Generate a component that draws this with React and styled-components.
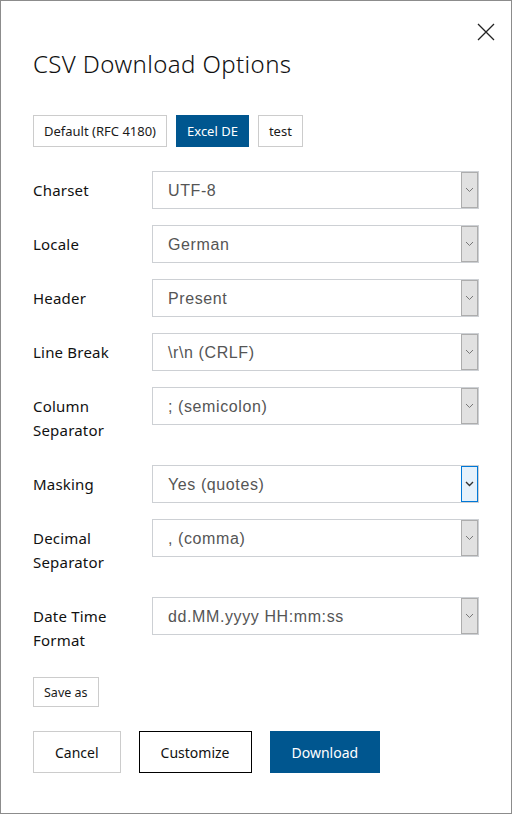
import React from "react";
import styled, { createGlobalStyle } from "styled-components";

const GlobalStyle = createGlobalStyle`
  body {
    margin: 0;
    background: #ffffff;
    font-family: "Noto Sans", "Open Sans", sans-serif;
  }
`;

const Dialog = styled.div`
  position: relative;
  width: 512px;
  height: 814px;
  box-sizing: border-box;
  border: 1px solid #8c8c8c;
  padding: 47px 32px 0 32px;
  background: #ffffff;
  color: #111111;
`;

const CloseButton = styled.button`
  position: absolute;
  top: 20px;
  right: 14px;
  width: 22px;
  height: 22px;
  padding: 0;
  border: none;
  background: none;
  display: flex;
  align-items: center;
  justify-content: center;
`;

const Title = styled.h1`
  margin: 0;
  font-size: 24px;
  line-height: 32px;
  font-weight: 300;
  letter-spacing: 0.4px;
  color: #111111;
`;

const PresetBar = styled.div`
  display: flex;
  gap: 9px;
  margin-top: 35px;
`;

const Preset = styled.button`
  height: 32px;
  box-sizing: border-box;
  padding: 0 10px;
  font-family: "Noto Sans", sans-serif;
  font-size: 13px;
  border: 1px solid ${(p) => (p.active ? "#00568f" : "#cccccc")};
  background: ${(p) => (p.active ? "#00568f" : "#ffffff")};
  color: ${(p) => (p.active ? "#ffffff" : "#1a1a1a")};
`;

const Form = styled.div`
  display: flex;
  flex-direction: column;
  gap: 16px;
  margin-top: 24px;
`;

const Row = styled.div`
  display: flex;
  align-items: flex-start;
`;

const Label = styled.div`
  width: 119px;
  flex-shrink: 0;
  padding: 7px 0;
  font-size: 15px;
  line-height: 24px;
  letter-spacing: 0.2px;
  color: #111111;
`;

const Select = styled.div`
  flex: 1;
  height: 38px;
  box-sizing: border-box;
  display: flex;
  border: 1px solid #cdd0d4;
  background: #ffffff;
`;

const SelectValue = styled.div`
  flex: 1;
  display: flex;
  align-items: center;
  padding: 1px 0 0 15px;
  font-family: "Liberation Sans", Arial, sans-serif;
  font-size: 16px;
  letter-spacing: 0.6px;
  color: #555555;
`;

const ArrowBox = styled.div`
  width: 17px;
  box-sizing: border-box;
  display: flex;
  align-items: center;
  justify-content: center;
  border: 1px solid ${(p) => (p.focused ? "#0078d7" : "#adadad")};
  background: ${(p) => (p.focused ? "#e5f1fb" : "#e1e1e1")};
`;

const SaveButton = styled.button`
  margin-top: 18px;
  height: 30px;
  box-sizing: border-box;
  padding: 0 10px;
  border: 1px solid #cccccc;
  background: #ffffff;
  font-family: "Noto Sans", sans-serif;
  font-size: 12.5px;
  color: #1a1a1a;
`;

const Footer = styled.div`
  display: flex;
  gap: 18px;
  margin-top: 24px;
`;

const ActionButton = styled.button`
  height: 42px;
  box-sizing: border-box;
  padding: 0 21px;
  font-family: "Noto Sans", sans-serif;
  font-size: 14px;
  border: 1px solid
    ${(p) =>
      p.variant === "primary" ? "#00568f" : p.variant === "outline" ? "#000000" : "#cccccc"};
  background: ${(p) => (p.variant === "primary" ? "#00568f" : "#ffffff")};
  color: ${(p) => (p.variant === "primary" ? "#ffffff" : "#111111")};
`;

const Chevron = ({ dark }) => (
  <svg width="9" height="6" viewBox="0 0 9 6">
    <path
      d="M1 1 L4.5 4.5 L8 1"
      fill="none"
      stroke={dark ? "#333333" : "#777777"}
      strokeWidth={dark ? 1.4 : 1}
    />
  </svg>
);

const fields = [
  { label: ["Charset"], value: "UTF-8" },
  { label: ["Locale"], value: "German" },
  { label: ["Header"], value: "Present" },
  { label: ["Line Break"], value: "\\r\\n (CRLF)" },
  { label: ["Column", "Separator"], value: "; (semicolon)" },
  { label: ["Masking"], value: "Yes (quotes)", focused: true },
  { label: ["Decimal", "Separator"], value: ", (comma)" },
  { label: ["Date Time", "Format"], value: "dd.MM.yyyy HH:mm:ss" },
];

export default function App() {
  return (
    <>
      <GlobalStyle />
      <Dialog>
        <CloseButton aria-label="close">
          <svg width="18" height="18" viewBox="0 0 18 18">
            <path d="M1 1 L17 17 M17 1 L1 17" stroke="#222222" strokeWidth="1.3" />
          </svg>
        </CloseButton>
        <Title>CSV Download Options</Title>
        <PresetBar>
          <Preset>Default (RFC 4180)</Preset>
          <Preset active>Excel DE</Preset>
          <Preset>test</Preset>
        </PresetBar>
        <Form>
          {fields.map((f) => (
            <Row key={f.label.join(" ")}>
              <Label>
                {f.label.map((l) => (
                  <div key={l}>{l}</div>
                ))}
              </Label>
              <Select>
                <SelectValue>{f.value}</SelectValue>
                <ArrowBox focused={f.focused}>
                  <Chevron dark={f.focused} />
                </ArrowBox>
              </Select>
            </Row>
          ))}
        </Form>
        <SaveButton>Save as</SaveButton>
        <Footer>
          <ActionButton>Cancel</ActionButton>
          <ActionButton variant="outline">Customize</ActionButton>
          <ActionButton variant="primary">Download</ActionButton>
        </Footer>
      </Dialog>
    </>
  );
}
